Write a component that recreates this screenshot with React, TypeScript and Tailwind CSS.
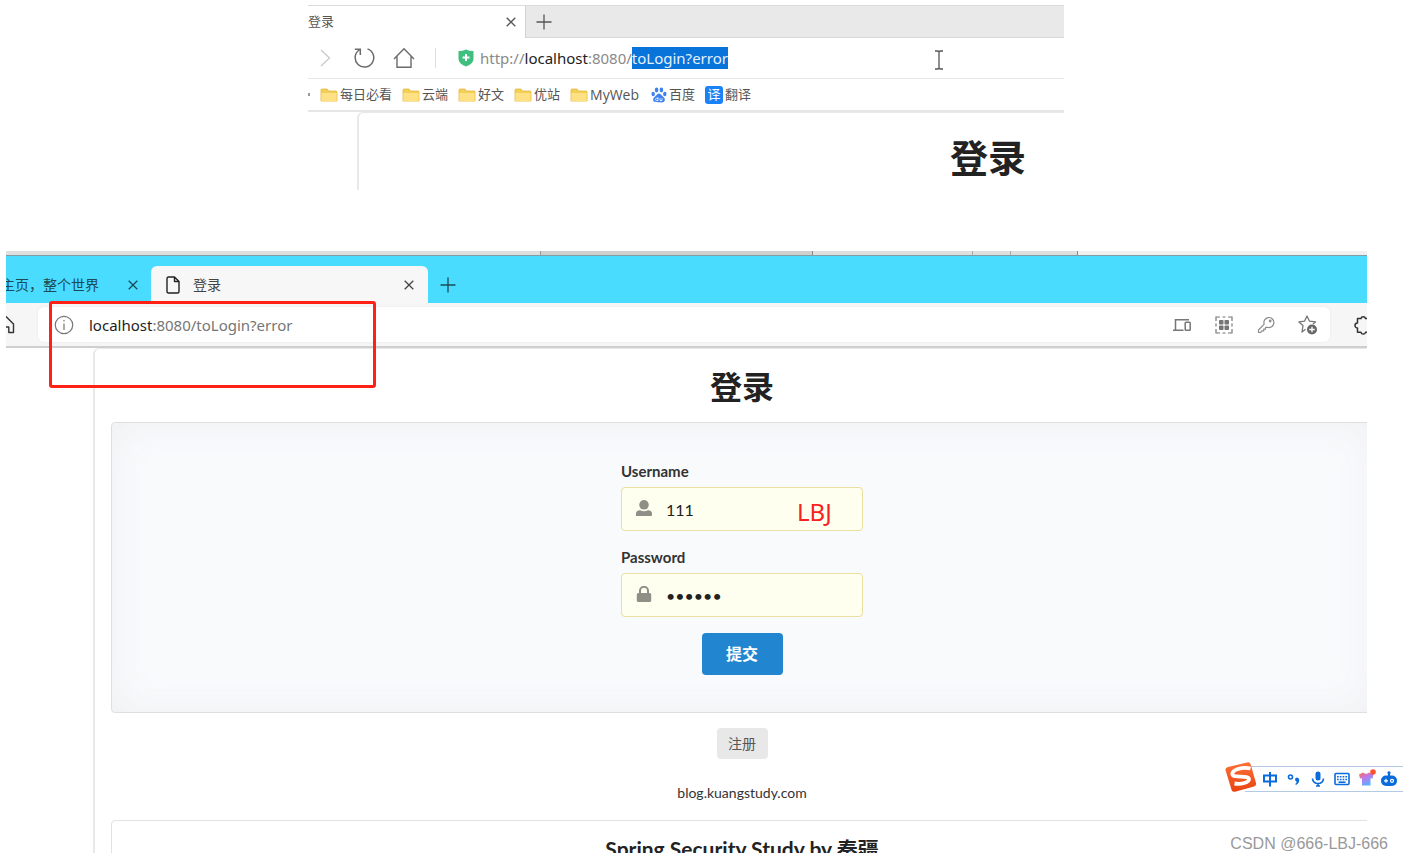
import type { ReactNode } from "react";

const bookmarks = ["每日必看", "云端", "好文", "优站"];

function CloseIcon({ className }: { className?: string }) {
  return (
    <svg viewBox="0 0 10 10" className={className} fill="none" stroke="currentColor" strokeWidth="1.3">
      <path d="M0.7 0.7L9.3 9.3M9.3 0.7L0.7 9.3" />
    </svg>
  );
}

function PlusIcon({ className }: { className?: string }) {
  return (
    <svg viewBox="0 0 16 16" className={className} fill="none" stroke="currentColor" strokeWidth="1.3">
      <path d="M8 0.5V15.5M0.5 8H15.5" />
    </svg>
  );
}

function FolderIcon() {
  return (
    <svg viewBox="0 0 18 16" className="h-4 w-[18px] shrink-0">
      <path d="M1 3a1 1 0 0 1 1-1h5l1.6 2H16a1 1 0 0 1 1 1v9H1z" fill="#f3cf58" stroke="#e3b93c" strokeWidth="0.8" />
      <path d="M1.4 6h15.2v8.4H1.4z" fill="#fde184" />
    </svg>
  );
}

function PawIcon() {
  return (
    <svg viewBox="0 0 16 16" className="h-4 w-4 shrink-0" fill="#3d82f0">
      <ellipse cx="5.6" cy="3" rx="1.8" ry="2.4" />
      <ellipse cx="10.4" cy="3" rx="1.8" ry="2.4" />
      <ellipse cx="2.2" cy="7" rx="1.7" ry="2.2" />
      <ellipse cx="13.8" cy="7" rx="1.7" ry="2.2" />
      <path d="M8 6.4c1.6 0 2.3 1.6 3.4 2.7 1.3 1.2 2.8 2.2 2.4 4.2-.4 2.2-2.6 2.4-5.8 2s-5.4.4-5.8-2c-.4-2 1.1-3 2.4-4.2C5.7 8 6.4 6.4 8 6.4z" />
      <path d="M7 10.2v3.3H5.6a1.1 1.1 0 0 1 0-2.2H7M9 11.2v2.3h2v-2.3" fill="none" stroke="#fff" strokeWidth="0.8" />
    </svg>
  );
}

function OldBrowser() {
  return (
    <section className="relative mt-[5px] mr-[339px] ml-[308px] h-[185px] overflow-hidden text-[13px] text-[#555]">
      <div className="flex h-[33px] border-t border-[#dcdcdc] bg-[#e9e9e9]">
        <div className="flex w-[218px] items-center justify-between border-r border-[#d2d2d2] bg-white pr-[9px]">
          <span>登录</span>
          <button aria-label="Close tab"><CloseIcon className="h-2.5 w-2.5" /></button>
        </div>
        <div className="flex flex-1 items-center border-b border-[#d8d8d8] pl-[10px]">
          <button aria-label="New tab"><PlusIcon className="h-4 w-4" /></button>
        </div>
      </div>

      <div className="flex h-10 items-center pl-[7px] text-[#6b6b6b]">
        <svg viewBox="0 0 20 20" className="h-5 w-5" fill="none" stroke="#ccc" strokeWidth="1.4"><path d="M6 2l8.5 8L6 18" /></svg>
        <svg viewBox="0 0 22 22" className="ml-[18px] h-[22px] w-[22px]" fill="none" stroke="currentColor" strokeWidth="1.5">
          <path d="M14.5 1.9A9.3 9.3 0 1 1 6.2 3M1.8 2.2h5.5V8" />
        </svg>
        <svg viewBox="0 0 22 22" className="ml-[18px] h-[22px] w-[22px]" fill="none" stroke="currentColor" strokeWidth="1.4">
          <path d="M1 12L11 1.8 21 12M4 9.5V20.3h14V9.5" />
        </svg>
        <div className="ml-5 h-5 w-px bg-[#ddd]" />
        <svg viewBox="0 0 16 18" className="ml-[22px] h-[18px] w-4">
          <path d="M0.5 2Q5 2 8 0.5 11 2 15.5 2V10q0 4.500-7.500 7.500Q.5 14.500.5 10z" fill="#3fbf7f" />
          <path d="M8 5v7M4.5 8.5h7" stroke="#fff" strokeWidth="2" />
        </svg>
        <div role="textbox" aria-label="Address" className="ml-[6px] font-['Noto_Sans',sans-serif] text-[15px] leading-[22px] text-[#8a8a8a]">
          http://<span className="text-[#222]">localhost</span>:8080/<span className="inline-block bg-[#0873d8] text-[#e4f1ff]">toLogin?error</span>
        </div>
      </div>
      <svg viewBox="0 0 10 20" className="absolute top-[45px] left-[626px] h-5 w-2.5" fill="none" stroke="#555" strokeWidth="1.3">
        <path d="M1 1h3l1 1 1-1h3M5 2v16M1 19h3l1-1 1 1h3" />
      </svg>

      <div className="flex h-[34px] items-center gap-[10px] border-t border-b-2 border-t-[#e6e9ec] border-b-[#e6e6e6] whitespace-nowrap">
        <span className="h-[3px] w-[2px] bg-[#999]" />
        {bookmarks.map((name) => (
          <a key={name} href="#" className="flex items-center gap-[2px]">
            <FolderIcon />
            <span>{name}</span>
          </a>
        ))}
        <a href="#" className="flex items-center gap-[2px] text-sm"><FolderIcon />MyWeb</a>
        <a href="#" className="ml-[2px] flex items-center gap-[2px]"><PawIcon />百度</a>
        <a href="#" className="flex items-center gap-[2px]">
          <span className="flex h-[18px] w-[18px] items-center justify-center rounded-[3px] bg-[#1a82f7] text-[13px] text-white">译</span>
          翻译
        </a>
      </div>

      <div className="ml-[49px] h-[90px] rounded-tl-md border-t border-l-2 border-[#e8e8e8] pl-[591px]">
        <h1 className="pt-[18px] text-[38px] leading-[52px] font-bold whitespace-nowrap text-[#222]">登录</h1>
      </div>
    </section>
  );
}

function Toolbar() {
  return (
    <div className="flex h-[45px] items-center border-b-2 border-[#cfcfcf] bg-[#f6f6f6]">
      <svg viewBox="0 0 20 20" className="-ml-[10px] h-5 w-5 shrink-0" fill="none" stroke="#333" strokeWidth="1.4">
        <path d="M2 9l8-7.5L17.5 9v8.5h-4.7V12H7v5.5H2z" strokeLinejoin="round" />
      </svg>
      <div className="ml-[22px] flex h-[35px] flex-1 items-center rounded-md bg-white pr-3 pl-4 text-[#767676] shadow-[0_0_2px_#e4e4e4]">
        <svg viewBox="0 0 20 20" className="h-5 w-5" fill="none" stroke="currentColor" strokeWidth="1.2">
          <circle cx="10" cy="10" r="8.7" />
          <path d="M10 8.5V15M10 5v1.6" />
        </svg>
        <div role="textbox" aria-label="Address" className="ml-[15px] flex-1 font-['Noto_Sans',sans-serif] text-[15px] leading-[22px]">
          <span className="text-[#1d1d1d]">localhost</span>:8080/toLogin?error
        </div>
        <div className="flex items-center gap-[22px]">
          <svg viewBox="0 0 20 20" className="h-5 w-5" fill="none" stroke="currentColor" strokeWidth="1.5">
            <path d="M3.5 14.5V4.700H17M1 15.200h10.500" />
            <rect x="13.2" y="7.2" width="5" height="8" rx="0.8" />
          </svg>
          <svg viewBox="0 0 20 20" className="h-5 w-5" fill="none" stroke="currentColor" strokeWidth="1.2">
            <path d="M2 6V2h4M8.5 2h3M14 2h4v4M18 8.5v3M18 14v4h-4M11.5 18h-3M6 18H2v-4M2 11.5v-3" />
            <g fill="currentColor" stroke="none">
              <rect x="5" y="5" width="4.500" height="4.500" rx="0.8" /><rect x="10.500" y="5" width="4.500" height="4.500" rx="0.8" />
              <rect x="5" y="10.500" width="4.500" height="4.500" rx="0.8" /><rect x="10.500" y="10.500" width="4.500" height="4.500" rx="0.8" />
            </g>
          </svg>
          <svg viewBox="0 0 20 20" className="h-5 w-5" fill="none" stroke="#8c8c8c" strokeWidth="1.2">
            <path d="M8.2 9.2a5 5 0 1 1 3 3L9.5 12.5v1.7H7.7v1.7H6L4.5 17.5H2.5V15z" strokeLinejoin="round" />
            <circle cx="14.2" cy="6" r="0.8" />
          </svg>
          <svg viewBox="0 0 20 20" className="h-5 w-5" fill="none" stroke="currentColor" strokeWidth="1.3">
            <path d="M7.5 14.3L4 17l1-6.5L.9 6.9 6.5 6.2 9 1l2.5 5.2 6 .7-2.5 2.2" strokeLinejoin="round" />
            <circle cx="14" cy="14.5" r="5" fill="#666" stroke="none" />
            <path d="M14 11.7v5.6M11.2 14.5h5.6" stroke="#fff" />
          </svg>
        </div>
      </div>
      <svg viewBox="0 0 20 20" className="-mr-[6px] ml-[23px] h-5 w-5 shrink-0" fill="none" stroke="#333" strokeWidth="1.5">
        <path d="M4.5 3.5H8a2.3 2.3 0 0 1 4.5 0H17v13.8h-4.5a2.3 2.3 0 0 1-4.5 0H4.5V13a2.5 2.5 0 0 1 0-5z" strokeLinejoin="round" />
      </svg>
    </div>
  );
}

function Field({ id, label, type, value, icon, children }: {
  id: string; label: string; type: string; value: string; icon: ReactNode; children?: ReactNode;
}) {
  return (
    <div className="mb-4">
      <label htmlFor={id} className="mb-[6px] block text-[15px] leading-5 font-bold text-[#333]">{label}</label>
      <div className="relative">
        <span className="absolute top-[13px] left-[15px]">{icon}</span>
        <input
          id={id}
          type={type}
          defaultValue={value}
          className="block h-11 w-full rounded border border-[#e8dfa0] bg-[#fffff0] pl-11 text-base text-[#222] outline-none"
        />
        {children}
      </div>
    </div>
  );
}

function LoginPage() {
  return (
    <main className="-mr-6 ml-[87px] rounded-tl-md border-t border-l-2 border-[#e8e8e8] pr-[18px] pl-4 font-[Lato,'Noto_Sans_CJK_SC',sans-serif]">
      <h1 className="pt-[14px] pb-[11px] text-center text-[32px] leading-[48px] font-bold text-[#222]">登录</h1>
      <form
        onSubmit={(e) => e.preventDefault()}
        className="flex flex-col items-center rounded border border-[#dedfe0] bg-[#f9fafc] pt-[38px] pb-[37px] shadow-[inset_0_0_40px_#eff0f2]"
      >
        <div className="w-[242px]">
          <Field
            id="username" label="Username" type="text" value="111"
            icon={<svg viewBox="0 0 16 16" className="h-4 w-4" fill="#8f8f87"><circle cx="8" cy="4.8" r="4.8" /><path d="M0 16v-2.5Q0 10.5 4 10.3q4 2 8 0 4 .2 4 3.2V15q0 1-1 1z" /></svg>}
          >
            <span className="absolute top-2 left-[176px] font-['Noto_Sans',sans-serif] text-2xl leading-[34px] text-[#fa2020]">LBJ</span>
          </Field>
          <Field
            id="password" label="Password" type="password" value="123456"
            icon={<svg viewBox="0 0 16 16" className="h-4 w-4" fill="#8f8f87"><rect x="0.8" y="7" width="14.4" height="9" rx="1.5" /><path d="M4 8V4.8a4 4 0 0 1 8 0V8" fill="none" stroke="#8f8f87" strokeWidth="2" /></svg>}
          />
        </div>
        <button type="submit" className="h-[42px] w-[81px] rounded bg-[#2185d0] text-base font-bold text-white">提交</button>
      </form>
      <div className="mt-[15px] flex flex-col items-center">
        <button className="h-[31px] w-[51px] rounded bg-[#e8e8e8] text-sm text-[#555]">注册</button>
        <a href="#" className="mt-6 text-sm leading-5 text-[#333]">blog.kuangstudy.com</a>
      </div>
      <footer className="mt-[17px] rounded border border-[#e2e2e2] pt-4 pb-10 text-center">
        <h3 className="text-[21px] leading-6 font-bold text-[#222]">Spring Security Study by 秦疆</h3>
      </footer>
    </main>
  );
}

function NewBrowser() {
  return (
    <section className="relative mt-[61px] mr-9 ml-[6px]">
      <div className="h-[602px] overflow-hidden">
        <div className="flex h-[5px] border-b border-[#7e9ea4] bg-[#f0f0f0]">
          <div className="w-[535px] border-r border-[#999] bg-[#dedfde]" />
          <div className="w-[272px] border-r border-[#888] bg-[#cfcfcd]" />
          <div className="w-[160px] border-r border-[#aaa] bg-[#dedfde]" />
          <div className="w-[38px] border-r border-[#aaa] bg-[#dedfde]" />
          <div className="w-[67px] border-r border-[#888] bg-[#dedfde]" />
        </div>
        <div className="flex h-[47px] items-end bg-[#49dcff] text-sm text-[#1b4a56]">
          <div className="flex h-[37px] w-[145px] items-center justify-between pr-[13px]">
            <span className="-ml-[5px]">主页，整个世界</span>
            <button aria-label="Close tab"><CloseIcon className="h-2.5 w-2.5" /></button>
          </div>
          <div className="flex h-[37px] w-[277px] items-center rounded-t-md bg-[#f7f7f7] pr-[14px] pl-[15px] text-[#444]">
            <svg viewBox="0 0 14 18" className="mr-[13px] h-[18px] w-3.5" fill="none" stroke="#222" strokeWidth="1.4">
              <path d="M1 2.5Q1 1 2.5 1H8.5L13 5.5V15.5Q13 17 11.5 17h-9Q1 17 1 15.5zM8.5 1v4.5H13" strokeLinejoin="round" />
            </svg>
            <span className="flex-1">登录</span>
            <button aria-label="Close tab"><CloseIcon className="h-2.5 w-2.5" /></button>
          </div>
          <button aria-label="New tab" className="flex h-[37px] items-center pl-3"><PlusIcon className="h-4 w-4" /></button>
        </div>
        <Toolbar />
        <LoginPage />
      </div>
      <div className="pointer-events-none absolute top-[50px] left-[43px] h-[87px] w-[327px] rounded-[3px] border-3 border-[#ff2116]" />
    </section>
  );
}

function InputMethodBar() {
  return (
    <div className="absolute top-[762px] right-0 flex h-[30px] w-[178px] items-center">
      <div className="absolute inset-x-0 top-1 bottom-0 left-5 border-y border-[#b4c9e4] bg-white" />
      <svg viewBox="0 0 32 30" className="relative h-[30px] w-8">
        <defs>
          <linearGradient id="sogou" x1="0" y1="0" x2="0" y2="1"><stop offset="0" stopColor="#fb7138" /><stop offset="1" stopColor="#ea4310" /></linearGradient>
        </defs>
        <path d="M3 5L22 .4q3-.8 3.7 2L31 21q.7 2.5-2 3.5L10 29.7q-3 .6-3.500-2L.5 8Q0 5.800 3 5z" fill="url(#sogou)" />
        <path d="M25.5 6.5C17 4.500 6.500 8 7.500 12.500c.8 3.800 16 .5 16.500 4.500.3 3.700-8 5.500-14.500 4.500" fill="none" stroke="#fff" strokeWidth="3.8" />
      </svg>
      <div className="relative mt-1 flex items-center gap-2 pl-[5px]">
        <svg viewBox="0 0 16 16" className="h-4 w-4" fill="none" stroke="#0a6bdc" strokeWidth="2"><path d="M2 4.5h12v6H2zM8 1v14.500" /></svg>
        <svg viewBox="0 0 16 16" className="h-4 w-4"><circle cx="4.5" cy="6" r="2" fill="none" stroke="#0a6bdc" strokeWidth="1.6" /><path d="M9 8.500a2.100 2.100 0 1 1 4.200.5q0 3.300-3.200 5l-.8-1q1.500-1 1.500-2.300Q9 10 9 8.500z" fill="#0a6bdc" /></svg>
        <svg viewBox="0 0 16 16" className="h-4 w-4" fill="none" stroke="#0a6bdc" strokeWidth="1.6"><rect x="5.5" y="0.5" width="5" height="9" rx="2.5" fill="#0a6bdc" stroke="none" /><path d="M2.5 7.5a5.5 5 0 0 0 11 0M8 12.500v2M6 15h4" /></svg>
        <svg viewBox="0 0 16 16" className="h-4 w-4" fill="none" stroke="#0a6bdc" strokeWidth="1.6"><rect x="1" y="2.5" width="14" height="11" rx="1" /><path d="M3 5.700h10M3 8.500h10" strokeDasharray="1.7 1.1" /><path d="M4.500 11.200h7" /></svg>
        <svg viewBox="0 0 18 18" className="-mt-[2px] h-[18px] w-[18px]">
          <defs>
            <linearGradient id="shirt" x1="0" y1="0" x2="0.6" y2="1"><stop offset="0" stopColor="#ff6b4f" /><stop offset="0.5" stopColor="#b97af0" /><stop offset="1" stopColor="#52b5ff" /></linearGradient>
          </defs>
          <path d="M1 5.500l4-2q3 2.500 6 0l4.500 2-1 4-2-.3V16.500H4V9.200L2 9.500z" fill="url(#shirt)" />
          <circle cx="15" cy="3" r="2.8" fill="#fb5230" />
        </svg>
        <svg viewBox="0 0 18 16" className="-ml-1 h-4 w-[18px]"><path d="M9 1v4" stroke="#0a6bdc" strokeWidth="2" /><circle cx="9" cy="1.8" r="1.6" fill="#0a6bdc" /><rect x="1" y="4.5" width="16" height="10.5" rx="5" fill="#0a6bdc" /><path d="M4 9.800h4M6 7.800v4" stroke="#fff" strokeWidth="1.2" /><circle cx="12" cy="9.8" r="1.5" fill="none" stroke="#fff" strokeWidth="1.2" /></svg>
      </div>
    </div>
  );
}

export default function App() {
  return (
    <div className="relative flow-root min-h-screen overflow-hidden bg-white font-['Open_Sans','Noto_Sans_CJK_SC',sans-serif]">
      <OldBrowser />
      <NewBrowser />
      <InputMethodBar />
      <p className="absolute top-[832px] right-[15px] font-['Liberation_Sans',sans-serif] text-base leading-6 text-[#999]">CSDN @666-LBJ-666</p>
    </div>
  );
}
